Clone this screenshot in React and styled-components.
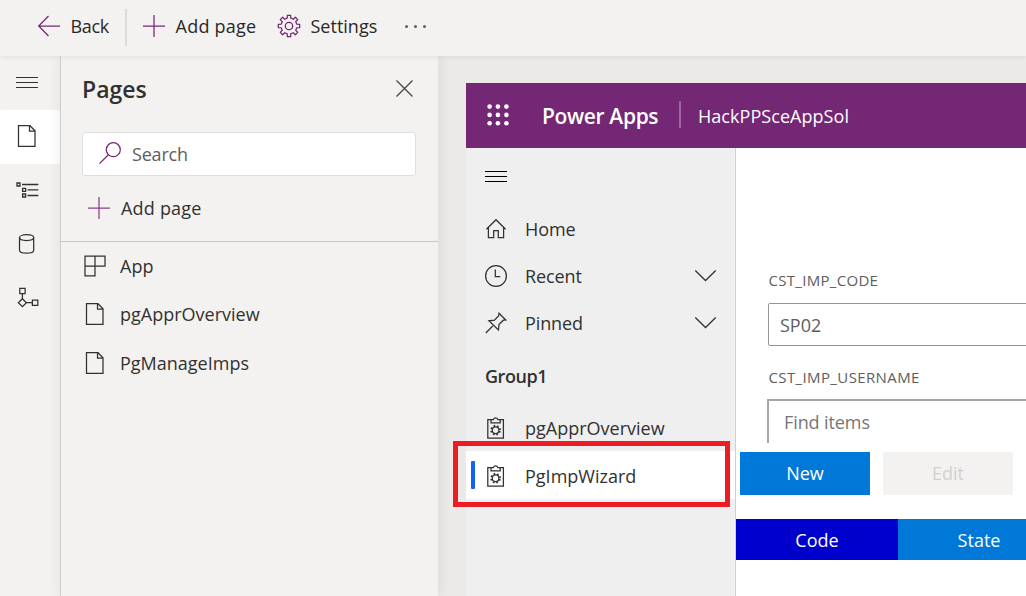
import React from "react";
import styled, { createGlobalStyle } from "styled-components";

const Global = createGlobalStyle`
  * { box-sizing: border-box; }
  body { margin: 0; overflow: hidden; background: #f3f2f1; font-family: "Open Sans", "Noto Sans", sans-serif; }
  button { border: 0; background: none; padding: 0; font: inherit; color: inherit; }
`;

const Shell = styled.div`
  display: flex; flex-direction: column; width: 100vw; height: 100vh; overflow: hidden;
  color: #323130; font-size: 18px;
`;
const Label = styled.span`
  display: block; white-space: nowrap; line-height: 26px;
  letter-spacing: ${(p) => p.$track || 0}px;
`;
const Glyph = styled.svg`
  display: block; flex: none; fill: none; stroke: currentColor; stroke-width: 1.25; overflow: visible;
`;

const TopBar = styled.header`
  display: flex; align-items: center; flex: none; height: 56px; padding: 0 0 4px 38px;
  background: #f3f2f1; box-shadow: 0 1px 6px rgba(0, 0, 0, 0.08); z-index: 2; color: #292827;
`;
const Command = styled.button`
  display: flex; align-items: center; gap: ${(p) => p.$gap}px; width: ${(p) => p.$width}px;
  svg { color: #742774; }
`;
const Separator = styled.i`
  width: 2px; height: 37px; margin: 2px 16px 0 0; background: #dcdbda;
`;
const Dots = styled.span`
  display: flex; gap: 6px; i { width: 3px; height: 3px; border-radius: 50%; background: #605e5c; }
`;

const Workspace = styled.div`display: flex; flex: 1; min-height: 0;`;
const Rail = styled.nav`
  width: 61px; flex: none; border-right: 1px solid #d8d6d4; background: #f3f2f1;
`;
const RailItem = styled.button`
  display: flex; align-items: center; width: 60px; height: 54px; padding: 0 0 2px 16px; border-radius: 2px;
  background: ${(p) => (p.$active ? "#fff" : "transparent")};
`;

const Panel = styled.aside`
  width: 377px; flex: none; background: #f3f2f1; z-index: 1; box-shadow: 0 0 14px rgba(0, 0, 0, 0.09);
`;
const PanelHead = styled.div`
  display: flex; align-items: center; justify-content: space-between; height: 76px;
  padding: 0 25px 10px 21px;
  svg { margin-top: -2px; color: #484644; }
`;
const PanelTitle = styled.h2`
  margin: 0; font-size: 23px; line-height: 32px; font-weight: 600; letter-spacing: ${(p) => p.$track || 0}px;
`;
const SearchBox = styled.div`
  display: flex; align-items: center; gap: 11px; width: 334px; height: 44px; margin-left: 21px; padding-left: 16px;
  border: 1px solid #e1dfdd; border-radius: 3px; background: #fff; color: #605e5c;
  svg { color: #742774; margin-top: -2px; }
`;
const AddRow = styled.div`
  display: flex; align-items: center; gap: 11px; height: 66px; padding: 0 0 2px 27px;
  border-bottom: 1px solid #c8c6c4; svg { color: #8a3f8a; }
`;
const PageRow = styled.div`
  display: flex; align-items: center; height: 48.4px; padding: 0 0 1px 23px; gap: 14px;
  &:nth-last-child(3), &:last-child { padding-bottom: 0; }
`;

const Canvas = styled.main`
  flex: 1; min-width: 0; padding: 27px 0 0 28px; background: #ebeae8; display: flex; flex-direction: column;
`;
const AppBar = styled.div`
  display: flex; align-items: center; flex: none; height: 65px; padding-left: 21px; background: #742774; color: #fff;
  svg { margin-top: -2px; }
`;
const Brand = styled.strong`
  margin-left: 33px; width: 137px; font-size: 21px; line-height: 30px; font-weight: 600; white-space: nowrap;
  letter-spacing: ${(p) => p.$track || 0}px;
`;
const BrandRule = styled.i`width: 2px; height: 27px; margin: -2px 17px 0 0; background: #9d679d;`;
const AppBody = styled.div`display: flex; flex: 1; min-height: 0;`;
const SiteMap = styled.nav`
  width: 270px; flex: none; border-right: 1px solid #d2d0ce; background: #efefef;
`;
const MenuToggle = styled.div`height: 57px; padding: 23px 0 0 19px; color: #000;`;
const NavRow = styled.div`
  display: flex; align-items: center; position: relative; height: ${(p) => p.$h || 47}px;
  padding: ${(p) => p.$drop || 0}px 19px 0 18.5px;
  background: ${(p) => (p.$active ? "#fff" : "transparent")};
  > span { flex: 1; margin-left: 18.5px; }
`;
const GroupTitle = styled.h3`
  margin: 0; height: 57px; padding: 17px 0 0 19px; font-size: 18px; line-height: 26px; font-weight: 600;
  letter-spacing: ${(p) => p.$track || 0}px;
`;
const ActiveMark = styled.i`
  position: absolute; left: 5px; top: 10px; width: 4px; height: 28px; background: #0f62fe; border-radius: 1px;
`;
const Highlight = styled.i`
  position: absolute; z-index: 3; left: -13px; top: -10px; width: 277px; height: 66px; border: 5px solid #ed1c24;
`;

const FormArea = styled.section`
  flex: 1; min-width: 0; overflow: hidden; background: #fff; padding-top: 119px; color: #605e5c;
`;
const FieldLabel = styled.label`
  display: block; margin-left: 32.5px; height: ${(p) => p.$h}px; font-size: 15px; line-height: 26px;
  letter-spacing: ${(p) => p.$track || 0}px;
`;
const TextField = styled.div`
  display: flex; align-items: center; height: 43px; margin: 0 -4px 18px 32px; padding-left: 11px;
  border: 1px solid #979593; border-radius: 2px;
`;
const ComboField = styled.div`
  display: flex; align-items: center; height: 44px; margin-left: 31px; padding-left: 15px;
  border: solid #a6a6a6; border-width: 2px 0 0 2px; color: #767676;
`;
const Actions = styled.div`display: flex; gap: 13px; margin: 9px 0 24px 4px;`;
const Action = styled.button`
  display: flex; align-items: center; justify-content: center; width: 130px; height: 43px; padding-bottom: 2px;
  background: ${(p) => (p.$muted ? "#f3f2f1" : "#0078d7")}; color: ${(p) => (p.$muted ? "#d2d0ce" : "#fff")};
`;
const GridHead = styled.div`display: flex; height: 41px;`;
const GridCell = styled.div`
  display: flex; flex: none; align-items: center; justify-content: center; width: 162px;
  background: ${(p) => (p.$sorted ? "#0000cd" : "#0078d7")}; color: #fff;
`;

const Icon = ({ w = 22, h = 22, sw, children }) => (
  <Glyph width={w} height={h} viewBox={`0 0 ${w} ${h}`} style={sw ? { strokeWidth: sw } : undefined}>{children}</Glyph>
);
const Plus = () => <Icon><path d="M11 0v22M0 11h22" /></Icon>;
const Menu = () => (
  <Icon w={22} h={11} sw={1}><path d="M0 .5h22M0 5.5h22M0 10.5h22" shapeRendering="crispEdges" /></Icon>
);
const Page = () => (
  <Icon w={22} h={22}><path d="M2.5.7h11.5l5 5v15.6H2.5zM13.5.7v5.4h5.5" /></Icon>
);
const Search = () => (
  <Icon><circle cx="14.3" cy="7.7" r="7" /><path d="M9.4 12.7.5 21.6" /></Icon>
);
const Close = () => <Icon w={17} h={17}><path d="m.5.5 16 16m0-16-16 16" /></Icon>;
const Chevron = () => <Icon w={21} h={11}><path d="m.3.5 10.2 10L20.7.5" /></Icon>;

const gearPath = (cx, cy, outer, inner, teeth, spread = 0.25) => {
  const step = (Math.PI * 2) / teeth;
  const pts = [];
  for (let i = 0; i < teeth; i += 1) {
    const mid = i * step;
    [[-spread - 0.03, inner], [-spread + 0.05, outer], [spread - 0.05, outer], [spread + 0.03, inner]].forEach(([o, r]) => {
      pts.push(`${(cx + r * Math.sin(mid + o * step)).toFixed(2)} ${(cy - r * Math.cos(mid + o * step)).toFixed(2)}`);
    });
  }
  return `M${pts.join("L")}Z`;
};
const Gear = () => (
  <Icon><path d={gearPath(11, 11, 10.8, 8, 8)} strokeLinejoin="round" /><circle cx="11" cy="11" r="3.7" /></Icon>
);
const Clipboard = () => (
  <Icon w={22} h={24}>
    <path d="M6 3.6H2.8v18.6h15.6V3.6h-3.2M6 6.9V3.6h2.4a2.3 2.3 0 0 1 4.4 0h2.4v3.3z" />
    <circle cx="10.6" cy="14.2" r="3.3" />
    <circle cx="10.6" cy="14.2" r="4.5" strokeWidth="1.7" strokeDasharray="1.6 1.934" strokeDashoffset="-.97" />
  </Icon>
);
const Tree = () => (
  <Icon w={23} h={16} sw={1.3}>
    <path d="M1 1h3v3H1zM6.6 6.4h3v3h-3zM6.6 12h3v3h-3zM6 2.5h16.3M11.5 7.9h10.8M11.5 13.5h10.8" />
  </Icon>
);
const Database = () => (
  <Icon w={22} h={22}>
    <ellipse cx="10.6" cy="4.6" rx="7.1" ry="2.9" />
    <path d="M3.5 4.6v12.7c0 3.9 14.2 3.9 14.2 0V4.6" />
  </Icon>
);
const Flow = () => (
  <Icon w={23} h={22}>
    <path d="M3.8 1.3h5.3v5.3H3.8zM16.4 13h5.4v5.4h-5.4zM6.4 11.7l4 4-4 4-4-4zM6.4 6.6v5.1M10.4 15.7h6" />
  </Icon>
);
const Tiles = () => (
  <Icon><path d="M1 1.2h20v9.9H11v9.7H1zM11 1.2v9.9H1" /></Icon>
);
const Home = () => (
  <Icon><path d="M1.4 11.2 11 1.7l9.6 9.5M3.4 9.4v10.3h5.3v-7h4.6v7h5.3V9.4" /></Icon>
);
const Clock = () => (
  <Icon><circle cx="11" cy="11" r="10.4" /><path d="M10.3 4.6v7.1h5" /></Icon>
);
const Pin = () => (
  <Icon><path d="m.8 21 7-7M14 1.3l6.8 6.7-2.4.2-4.3 4.2-.7 5.6-9.5-9.2 5.6-.7 4.2-4.3z" /></Icon>
);
const Waffle = () => (
  <Glyph width="22" height="22" viewBox="0 0 22 22">
    {[2.6, 10.9, 19.2].flatMap((y) => [2.6, 10.9, 19.4].map((x) => (
      <circle key={`${x}-${y}`} cx={x} cy={y} r="2.3" fill="#fff" stroke="none" />
    )))}
  </Glyph>
);

const railIcons = [Menu, Page, Tree, Database, Flow];
const pages = [
  { name: "App", icon: Tiles },
  { name: "pgApprOverview", icon: Page },
  { name: "PgManageImps", icon: Page },
];
const links = [
  { name: "Home", icon: Home },
  { name: "Recent", icon: Clock, expands: true },
  { name: "Pinned", icon: Pin, expands: true },
];

export default function App() {
  return (
    <Shell>
      <Global />
      <TopBar>
        <Command $gap={10.5} $width={87}><Icon><path d="M22 11H1M10.5 1 .7 11l9.8 10" /></Icon><Label $track={-0.3}>Back</Label></Command>
        <Separator />
        <Command $gap={10.5} $width={135}><Plus /><Label $track={0.25}>Add page</Label></Command>
        <Command $gap={10.5} $width={127}><Gear /><Label>Settings</Label></Command>
        <Dots><i /><i /><i /></Dots>
      </TopBar>
      <Workspace>
        <Rail>
          {railIcons.map((RailIcon, i) => (
            <RailItem key={i} $active={i === 1}><RailIcon /></RailItem>
          ))}
        </Rail>
        <Panel>
          <PanelHead><PanelTitle>Pages</PanelTitle><Close /></PanelHead>
          <SearchBox><Search /><Label $track={-0.2}>Search</Label></SearchBox>
          <AddRow><Plus /><Label $track={0.2}>Add page</Label></AddRow>
          {pages.map(({ name, icon: PageIcon }) => (
            <PageRow key={name}><PageIcon /><Label>{name}</Label></PageRow>
          ))}
        </Panel>
        <Canvas>
          <AppBar>
            <Waffle />
            <Brand $track={-0.35}>Power Apps</Brand>
            <BrandRule />
            <Label $track={0.05}>HackPPSceAppSol</Label>
          </AppBar>
          <AppBody>
            <SiteMap>
              <MenuToggle><Menu /></MenuToggle>
              {links.map(({ name, icon: LinkIcon, expands }) => (
                <NavRow key={name}><LinkIcon /><Label $track={-0.1}>{name}</Label>{expands && <Chevron />}</NavRow>
              ))}
              <GroupTitle $track={-0.45}>Group1</GroupTitle>
              <NavRow $h={48} $drop={2}><Clipboard /><Label>pgApprOverview</Label></NavRow>
              <NavRow $h={48} $drop={2} $active><ActiveMark /><Clipboard /><Label>PgImpWizard</Label><Highlight /></NavRow>
            </SiteMap>
            <FormArea>
              <FieldLabel $h={36} $track={0.3}>CST_IMP_CODE</FieldLabel>
              <TextField><Label>SP02</Label></TextField>
              <FieldLabel $h={35} $track={0.38}>CST_IMP_USERNAME</FieldLabel>
              <ComboField><Label $track={-0.1}>Find items</Label></ComboField>
              <Actions><Action>New</Action><Action $muted>Edit</Action></Actions>
              <GridHead><GridCell $sorted>Code</GridCell><GridCell>State</GridCell></GridHead>
            </FormArea>
          </AppBody>
        </Canvas>
      </Workspace>
    </Shell>
  );
}
